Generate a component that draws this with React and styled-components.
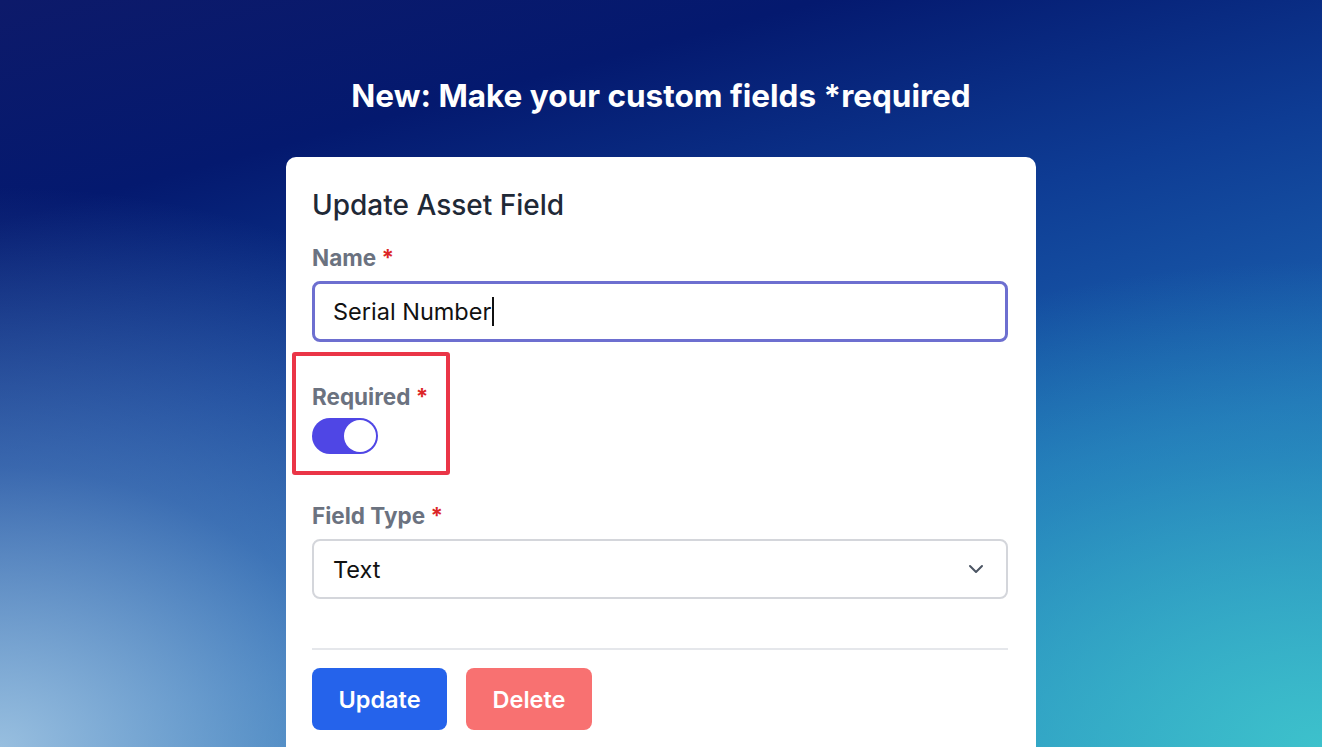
import React from 'react';
import styled, { createGlobalStyle } from 'styled-components';
import { ChevronDown } from 'lucide-react';

const GlobalStyle = createGlobalStyle`
  html, body {
    margin: 0;
    padding: 0;
    height: 100%;
    overflow: hidden;
  }
  body {
    font-family: Inter, "Noto Sans", sans-serif;
  }
  * {
    box-sizing: border-box;
  }
`;

const App = () => {
  return (
    <>
      <GlobalStyle />
      <Page>
        <Heading>New: Make your custom fields *required</Heading>
        <Card>
          <CardTitle>Update Asset Field</CardTitle>

          <Label>
            Name <Star>*</Star>
          </Label>
          <TextBox>
            Serial Number
            <Caret />
          </TextBox>

          <Highlight>
            <Label>
              Required <Star>*</Star>
            </Label>
            <Toggle $on>
              <Knob />
            </Toggle>
          </Highlight>

          <Label $top={26}>
            Field Type <Star>*</Star>
          </Label>
          <Select>
            <span>Text</span>
            <ChevronDown size={24} strokeWidth={2} color="#4b5563" />
          </Select>

          <Divider />

          <Actions>
            <Button $bg="#2563eb" $w={135}>Update</Button>
            <Button $bg="#f87171" $w={126}>Delete</Button>
          </Actions>
        </Card>
      </Page>
    </>
  );
};

const Page = styled.main`
  height: 100vh;
  display: flex;
  flex-direction: column;
  align-items: center;
  padding-top: 76px;
  background:
    radial-gradient(ellipse 55% 75% at 0% 100%, rgba(165, 200, 228, 0.9) 0%, rgba(110, 155, 205, 0.45) 50%, rgba(110, 155, 205, 0) 100%),
    radial-gradient(ellipse 60% 65% at 100% 100%, rgba(62, 196, 204, 0.95) 0%, rgba(50, 170, 200, 0.45) 60%, rgba(50, 170, 200, 0) 100%),
    linear-gradient(165deg, #0d1a6a 0%, #04196f 20%, #0e3c94 42%, #1d66b2 68%, #2a8cc0 100%);
`;

const Heading = styled.h1`
  margin: 0;
  color: #ffffff;
  font-size: 31.5px;
  line-height: 40px;
  font-weight: 700;
`;

const Card = styled.section`
  margin-top: 41px;
  width: 750px;
  flex: 1;
  background: #ffffff;
  border-radius: 10px 10px 0 0;
  padding: 32px 28px 0 26px;
  display: flex;
  flex-direction: column;
`;

const CardTitle = styled.h2`
  margin: 0;
  font-size: 28px;
  line-height: 32px;
  font-weight: 500;
  color: #1f2937;
`;

const Label = styled.label`
  display: block;
  margin-top: ${(p) => (p.$top !== undefined ? p.$top : 22)}px;
  font-size: 22.5px;
  line-height: 30px;
  font-weight: 700;
  color: #6b7280;
`;

const Star = styled.span`
  color: #dc2626;
`;

const TextBox = styled.div`
  margin-top: 8px;
  height: 61px;
  border: 3px solid #6d6fd0;
  border-radius: 8px;
  display: flex;
  align-items: center;
  padding: 0 18px;
  font-size: 23.5px;
  color: #111111;
`;

const Caret = styled.span`
  display: inline-block;
  width: 2px;
  height: 29px;
  background: #111111;
  margin-left: 1px;
`;

const Highlight = styled.div`
  margin-top: 10px;
  margin-left: -20px;
  width: 158px;
  border: 4px solid #ea3547;
  border-radius: 3px;
  padding: 4px 10px 17px 16px;
  display: flex;
  flex-direction: column;
  align-items: flex-start;
`;

const Toggle = styled.div`
  margin-top: 6px;
  width: 66px;
  height: 36px;
  border-radius: 18px;
  background: ${(p) => (p.$on ? '#4f46e5' : '#e5e7eb')};
  display: flex;
  align-items: center;
  justify-content: ${(p) => (p.$on ? 'flex-end' : 'flex-start')};
  padding: 0 2px;
`;

const Knob = styled.span`
  width: 32px;
  height: 32px;
  border-radius: 50%;
  background: #ffffff;
`;

const Select = styled.div`
  margin-top: 8px;
  height: 60px;
  border: 2px solid #d4d6db;
  border-radius: 8px;
  display: flex;
  align-items: center;
  justify-content: space-between;
  padding: 0 18px 0 19px;
  font-size: 23.5px;
  color: #111111;
`;

const Divider = styled.hr`
  margin: 49px 0 0 0;
  border: none;
  height: 2px;
  background: #e5e7eb;
`;

const Actions = styled.div`
  margin-top: 18px;
  display: flex;
  gap: 19px;
`;

const Button = styled.button`
  width: ${(p) => p.$w}px;
  height: 62px;
  border: none;
  border-radius: 8px;
  background: ${(p) => p.$bg};
  color: #ffffff;
  font-family: Inter, "Noto Sans", sans-serif;
  font-size: 23.5px;
  font-weight: 600;
  cursor: pointer;
`;

export default App;
